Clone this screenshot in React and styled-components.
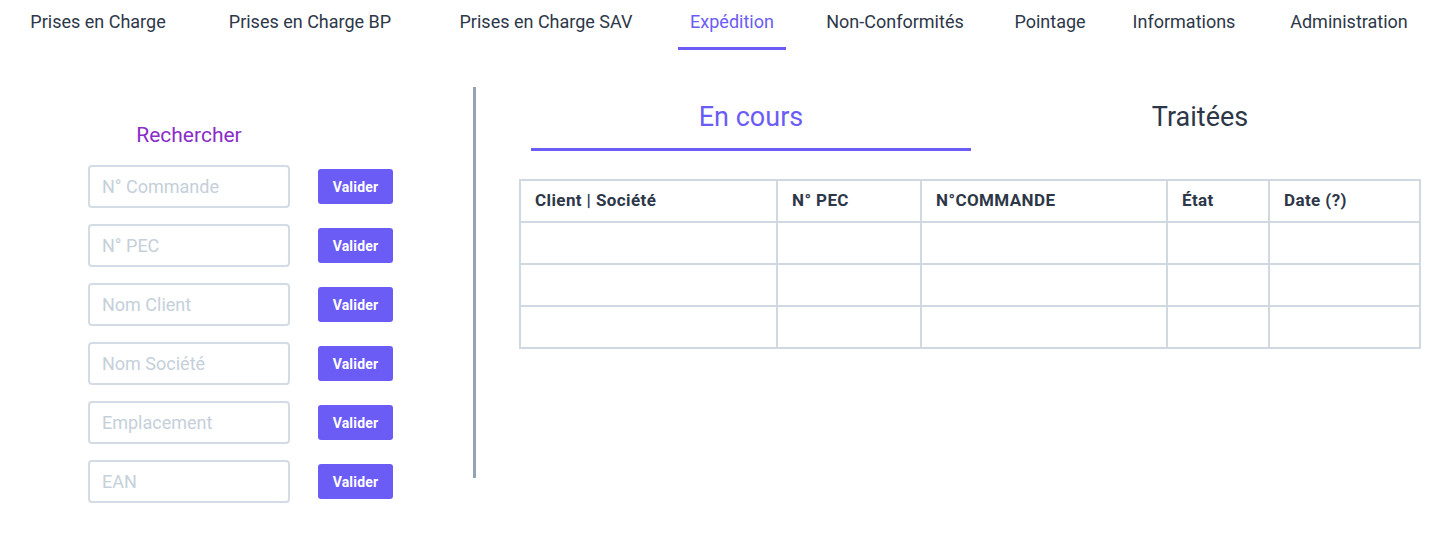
import React from "react";
import styled, { createGlobalStyle } from "styled-components";

const GlobalStyle = createGlobalStyle`
  body {
    margin: 0;
    background: #fff;
    font-family: Roboto, "Noto Sans", sans-serif;
    color: #2d3748;
  }
`;

const navItems = [
  { label: "Prises en Charge", width: 196 },
  { label: "Prises en Charge BP", width: 228 },
  { label: "Prises en Charge SAV", width: 244 },
  { label: "Expédition", width: 128, active: true },
  { label: "Non-Conformités", width: 198 },
  { label: "Pointage", width: 112 },
  { label: "Informations", width: 156 },
  { label: "Administration", width: 174 },
];

const searchFields = [
  "N° Commande",
  "N° PEC",
  "Nom Client",
  "Nom Société",
  "Emplacement",
  "EAN",
];

const columns = [
  { label: "Client | Société", width: 257 },
  { label: "N° PEC", width: 144 },
  { label: "N°COMMANDE", width: 246 },
  { label: "État", width: 102 },
  { label: "Date (?)", width: 151 },
];

const App = () => {
  return (
    <>
      <GlobalStyle />
      <Nav>
        {navItems.map((item) => (
          <NavItem key={item.label} $width={item.width}>
            <NavLabel $active={item.active}>{item.label}</NavLabel>
          </NavItem>
        ))}
      </Nav>
      <Main>
        <SearchPanel>
          <SearchTitle>Rechercher</SearchTitle>
          <SearchList>
            {searchFields.map((field) => (
              <SearchRow key={field}>
                <SearchInput placeholder={field} />
                <ValidateButton type="button">Valider</ValidateButton>
              </SearchRow>
            ))}
          </SearchList>
        </SearchPanel>
        <Divider />
        <ResultsPanel>
          <Tabs>
            <Tab $active>En cours</Tab>
            <Tab>Traitées</Tab>
          </Tabs>
          <Table>
            <colgroup>
              {columns.map((col) => (
                <col key={col.label} style={{ width: col.width }} />
              ))}
            </colgroup>
            <thead>
              <tr>
                {columns.map((col) => (
                  <Th key={col.label}>{col.label}</Th>
                ))}
              </tr>
            </thead>
            <tbody>
              {[0, 1, 2].map((row) => (
                <tr key={row}>
                  {columns.map((col) => (
                    <Td key={col.label} />
                  ))}
                </tr>
              ))}
            </tbody>
          </Table>
        </ResultsPanel>
      </Main>
    </>
  );
};

const Nav = styled.nav`
  display: flex;
  height: 50px;
`;

const NavItem = styled.div`
  width: ${(p) => p.$width}px;
  display: flex;
  justify-content: center;
  flex-shrink: 0;
`;

const NavLabel = styled.span`
  display: block;
  height: 50px;
  box-sizing: border-box;
  padding: 10px 12px 0;
  font-size: 18px;
  line-height: 24px;
  color: ${(p) => (p.$active ? "#6b5cf6" : "#2d3748")};
  border-bottom: 3px solid ${(p) => (p.$active ? "#6b5cf6" : "transparent")};
  white-space: nowrap;
`;

const Main = styled.main`
  display: flex;
  margin-top: 37px;
`;

const SearchPanel = styled.section`
  width: 473px;
  box-sizing: border-box;
  padding: 35px 0 0 88px;
  flex-shrink: 0;
`;

const SearchTitle = styled.h2`
  width: 202px;
  margin: 0 0 16px;
  text-align: center;
  font-size: 21px;
  line-height: 27px;
  font-weight: 400;
  color: #8a2dc8;
`;

const SearchList = styled.div`
  display: flex;
  flex-direction: column;
  gap: 16px;
`;

const SearchRow = styled.div`
  display: flex;
  align-items: center;
  gap: 28px;
`;

const SearchInput = styled.input`
  width: 202px;
  height: 43px;
  box-sizing: border-box;
  border: 2px solid #d3dce4;
  border-radius: 4px;
  padding: 0 12px;
  font-family: Roboto, "Noto Sans", sans-serif;
  font-size: 18px;
  color: #2d3748;
  outline: none;

  &::placeholder {
    color: #c5d0da;
  }
`;

const ValidateButton = styled.button`
  width: 75px;
  height: 35px;
  border: none;
  border-radius: 3px;
  background: #6b5cf6;
  color: #fff;
  font-family: Roboto, "Noto Sans", sans-serif;
  font-size: 14px;
  letter-spacing: 0.2px;
  font-weight: 700;
  padding: 0;
`;

const Divider = styled.div`
  width: 3px;
  height: 391px;
  background: #94a3b8;
  flex-shrink: 0;
`;

const ResultsPanel = styled.section`
  padding: 14px 0 0 43px;
  display: flex;
  flex-direction: column;
`;

const Tabs = styled.div`
  display: flex;
  gap: 9px;
  margin-left: 12px;
`;

const Tab = styled.div`
  width: 440px;
  text-align: center;
  font-size: 27px;
  line-height: 32px;
  padding-bottom: 15px;
  color: ${(p) => (p.$active ? "#6b5cf6" : "#2d3748")};
  border-bottom: 3px solid ${(p) => (p.$active ? "#6b5cf6" : "transparent")};
`;

const Table = styled.table`
  margin-top: 28px;
  width: 900px;
  border-collapse: collapse;
  table-layout: fixed;
  border: 2px solid #d0d9e2;
`;

const Th = styled.th`
  height: 42px;
  box-sizing: border-box;
  padding: 0 13px 3px 14px;
  text-align: left;
  font-size: 17px;
  letter-spacing: 0.4px;
  font-weight: 700;
  color: #2d3748;
  border: 2px solid #d0d9e2;
`;

const Td = styled.td`
  height: 42px;
  box-sizing: border-box;
  border: 2px solid #d0d9e2;
`;

export default App;
